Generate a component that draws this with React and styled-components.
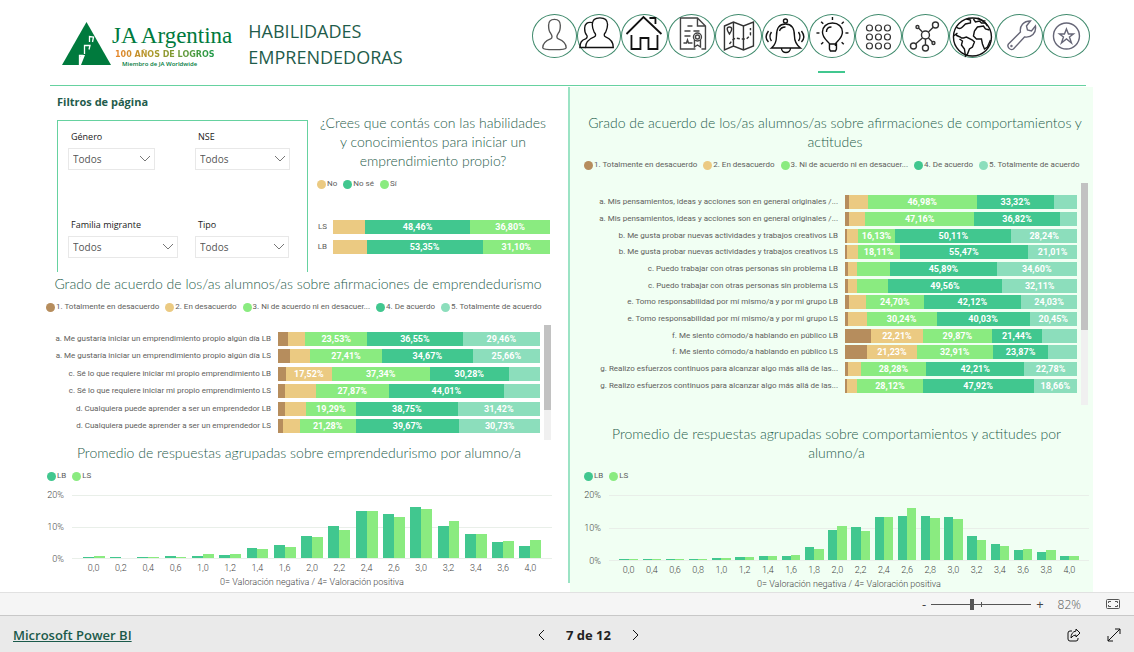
import React from 'react';
import styled, { createGlobalStyle } from 'styled-components';

const colors = {
  brown: '#b68d5d',
  sand: '#ebca82',
  lime: '#8aeb80',
  green: '#41c78f',
  mint: '#8cdebc',
  title: '#1f5c4b',
  text: '#605e5c',
  rule: '#66d2a0',
};

const agreement = [
  { name: '1. Totalmente en desacuerdo', color: colors.brown },
  { name: '2. En desacuerdo', color: colors.sand },
  { name: '3. Ni de acuerdo ni en desacuer...', color: colors.lime },
  { name: '4. De acuerdo', color: colors.green },
  { name: '5. Totalmente de acuerdo', color: colors.mint },
];

const confidence = [
  { name: 'No', color: colors.sand },
  { name: 'No sé', color: colors.green },
  { name: 'Sí', color: colors.lime },
];

const lines = [
  { name: 'LB', color: colors.green },
  { name: 'LS', color: colors.lime },
];

const confidenceRows = [
  { label: 'LS', values: [14.74, 48.46, 36.8] },
  { label: 'LB', values: [15.55, 53.35, 31.1] },
];

const entrepreneurRows = [
  { label: 'a. Me gustaría iniciar un emprendimiento propio algún día LB', values: [3.9, 6.56, 23.53, 36.55, 29.46] },
  { label: 'a. Me gustaría iniciar un emprendimiento propio algún día LS', values: [4.4, 7.86, 27.41, 34.67, 25.66] },
  { label: 'c. Sé lo que requiere iniciar mi propio emprendimiento LB', values: [3, 17.52, 37.34, 30.28, 11.86] },
  { label: 'c. Sé lo que requiere iniciar mi propio emprendimiento LS', values: [2.7, 11.7, 27.87, 44.01, 13.72] },
  { label: 'd. Cualquiera puede aprender a ser un emprendedor LB', values: [2.7, 7.84, 19.29, 38.75, 31.42] },
  { label: 'd. Cualquiera puede aprender a ser un emprendedor LS', values: [2, 6.32, 21.28, 39.67, 30.73] },
];

const behaviourRows = [
  { label: 'a. Mis pensamientos, ideas y acciones son en general originales /...', values: [1.6, 8.2, 46.98, 33.32, 9.9] },
  { label: 'a. Mis pensamientos, ideas y acciones son en general originales /...', values: [1.6, 7, 47.16, 36.82, 7.42] },
  { label: 'b. Me gusta probar nuevas actividades y trabajos creativos LB', values: [1, 4.52, 16.13, 50.11, 28.24] },
  { label: 'b. Me gusta probar nuevas actividades y trabajos creativos LS', values: [0.7, 4.71, 18.11, 55.47, 21.01] },
  { label: 'c. Puedo trabajar con otras personas sin problema LB', values: [1.4, 3.6, 14.51, 45.89, 34.6] },
  { label: 'c. Puedo trabajar con otras personas sin problema LS', values: [1.5, 3.5, 13.33, 49.56, 32.11] },
  { label: 'e. Tomo responsabilidad por mí mismo/a y por mi grupo LB', values: [1.9, 7.25, 24.7, 42.12, 24.03] },
  { label: 'e. Tomo responsabilidad por mí mismo/a y por mi grupo LS', values: [1.1, 8.18, 30.24, 40.03, 20.45] },
  { label: 'f. Me siento cómodo/a hablando en público LB', values: [11.3, 22.21, 29.87, 21.44, 15.18] },
  { label: 'f. Me siento cómodo/a hablando en público LS', values: [9.6, 21.23, 32.91, 23.87, 12.39] },
  { label: 'g. Realizo esfuerzos continuos para alcanzar algo más allá de las...', values: [1.2, 5.53, 28.28, 42.21, 22.78] },
  { label: 'g. Realizo esfuerzos continuos para alcanzar algo más allá de las...', values: [0.8, 4.5, 28.12, 47.92, 18.66] },
];

const entrepreneurColumns = [
  ['0,0', 0.4, 0.6], ['0,2', 0.4, 0], ['0,4', 0.4, 0.4], ['0,6', 0.5, 0.4], ['1,0', 0.8, 1.2],
  ['1,2', 1.1, 1.2], ['1,4', 3.1, 2.9], ['1,6', 4.3, 3.7], ['2,0', 7.2, 6.9], ['2,2', 10.4, 8.9],
  ['2,4', 15.2, 15.2], ['2,6', 14.2, 13.2], ['3,0', 16.4, 15.7], ['3,2', 10.4, 11.9], ['3,4', 7.9, 7.9],
  ['3,6', 5.3, 5.6], ['4,0', 4, 5.7],
];

const behaviourColumns = [
  ['0,0', 0.4, 0.4], ['0,4', 0.4, 0.4], ['0,6', 0.4, 0.4], ['0,8', 0.4, 0.4], ['1,0', 0.5, 0.5],
  ['1,2', 0.8, 0.8], ['1,4', 1.4, 1.1], ['1,6', 1.3, 1.5], ['1,8', 4.2, 3.3], ['2,0', 9.4, 10.6],
  ['2,2', 10.2, 9.2], ['2,4', 13.3, 13.3], ['2,6', 13.7, 16.1], ['2,8', 13.8, 13.1], ['3,0', 13.4, 12.9],
  ['3,2', 7.6, 6.3], ['3,4', 5.1, 4.5], ['3,6', 3.1, 3.5], ['3,8', 2.4, 3.2], ['4,0', 1.4, 1.4],
];

const rays = [0, 45, 90, 135, 225, 270, 315];

const navItems = [
  {
    name: 'Perfil',
    stroke: '#555',
    icon: <path d="M11 34c0-5 3-7 8-9 2-1 2-3 0-6-2-2-2-4-2-8 0-4 2-6 6-6s6 2 6 6c0 4 0 6-2 8-2 3-2 5 0 6 5 2 8 4 8 9 0 1-3 2-12 2s-12-1-12-2z" />,
  },
  {
    name: 'Alumnos',
    stroke: '#111',
    icon: (
      <>
        <path d="M9 34c0-6 4-9 9-11 2-1 2-3 0-5-1-2-2-4-2-8 0-5 3-7 8-7s8 2 8 7c0 4-1 6-2 8-2 2-2 4 0 5 5 2 8 5 8 11z" />
        <path d="M9 34H3c0-5 2-8 6-9 2-1 2-3 1-4-2-2-2-4-2-7 0-5 3-7 8-6" />
      </>
    ),
  },
  {
    name: 'Inicio',
    stroke: '#111',
    width: 1.8,
    icon: (
      <>
        <path d="M5 20 22 3l18 17M28 4h6v6" />
        <path d="M10 21v14h9V24h8v11h9V21" />
      </>
    ),
  },
  {
    name: 'Certificado',
    stroke: '#444',
    icon: (
      <>
        <path d="M27 35H12V4h17l8 8v23h-4M29 4v8h8" />
        <path d="M19 12h5M16 17h6M25 17h6M16 22h6M15 29h3l1-3 1 3h4" />
        <circle cx="29" cy="23" r="4" />
        <circle cx="29" cy="23" r="2" />
        <path d="M26 26v7l3-2 3 2v-7" />
      </>
    ),
  },
  {
    name: 'Mapa',
    stroke: '#333',
    icon: (
      <>
        <path d="M9 12l9-4 10 4 10-4v24l-10 4-10-4-9 4zM18 8v24M28 12v24" />
        <path d="M14 20c-3-4-3-7 0-7s3 3 0 7z" />
        <path d="M14 30l3-4 3-2 6 1 5 0 4-4v-7" strokeDasharray="3 2" />
      </>
    ),
  },
  {
    name: 'Alertas',
    stroke: '#111',
    icon: (
      <>
        <path d="M9 34c4-3 5-7 5-12 0-8 3-12 9-12s9 4 9 12c0 5 2 9 6 12z" />
        <circle cx="23" cy="7" r="2" />
        <path d="M19 34c0 6 9 6 9 0M17 17c1-3 3-4 6-4" />
        <path d="M9 18c-2 3-2 6 0 9M6 17c-3 4-3 8 0 11M36 18c2 3 2 6 0 9M39 17c3 4 3 8 0 11" />
      </>
    ),
  },
  {
    name: 'Habilidades',
    stroke: '#111',
    active: true,
    icon: (
      <>
        <path d="M20 32v-2c0-2-7-5-7-12 0-5 4-9 10-9s10 4 10 9c0 7-7 10-7 12v2M20 30h7v5l-1 2h-5l-1-2zM17 18c0-3 2-5 5-5" />
        {rays.map(angle => (
          <path key={angle} d="M23 6V3" transform={`rotate(${angle} 23 19)`} />
        ))}
      </>
    ),
  },
  {
    name: 'Módulos',
    stroke: '#333',
    width: 1.2,
    icon: [14, 23, 32].map(cy => [14, 23, 32].map(cx => <circle key={`${cx}-${cy}`} cx={cx} cy={cy} r="3" />)),
  },
  {
    name: 'Redes',
    stroke: '#333',
    icon: (
      <>
        <circle cx="23" cy="21" r="4" />
        <circle cx="15" cy="13" r="1.500" />
        <circle cx="33" cy="11" r="3" />
        <circle cx="11" cy="32" r="3" />
        <circle cx="23" cy="34" r="3" />
        <circle cx="31" cy="29" r="1.500" />
        <path d="M20 18l-4-4M26 18l5-5M20 24l-7 6M23 25v6M26 24l4 4" />
      </>
    ),
  },
  {
    name: 'Mundo',
    stroke: '#111',
    icon: (
      <>
        <circle cx="23" cy="23" r="19" />
        <path d="M7 13c2 2 4 2 6 0l3-3 5-1 0-3-4-1M4 22l4-3M6 20c2 3 4 2 6 4l2 0 3-1 6 3 2 2-2 5-3 2-2 5-2 2-1-7-3-4 1-4-3-2" />
        <path d="M25 17l3-4 6-1 2 3 4 1M25 17l-1 5 3 3h5l1 5 2 5 3-2 3-7M24 5l2 3 4-1 2 2h4l2 3M28 4l6 3h2" />
      </>
    ),
  },
  {
    name: 'Herramientas',
    stroke: '#667',
    icon: (
      <>
        <path d="M12 30l12-12c-1-6 3-11 10-11l-4 5 1 4 4 1 4-5c1 7-4 12-11 11L17 35c-3 2-7-2-5-5z" />
        <circle cx="15" cy="32" r="0.500" />
      </>
    ),
  },
  {
    name: 'Destacados',
    stroke: '#667',
    icon: (
      <>
        <circle cx="23" cy="22" r="13" />
        <path d="M23 15l2 5h5l-4 3 2 6-5-4-5 4 2-6-4-3h5z" />
      </>
    ),
  },
];

const filters = [
  { id: 'genero', name: 'Género', width: 87 },
  { id: 'nse', name: 'NSE', width: 95 },
  { id: 'familia', name: 'Familia migrante', width: 110 },
  { id: 'tipo', name: 'Tipo', width: 94 },
];

// Percentages below this do not fit inside their segment
const MIN_LABEL = 16;

const formatPercent = value => `${value.toFixed(2).replace('.', ',')}%`;

const Legend = ({ items, indent = 0 }) => (
  <StyledLegend $indent={indent}>
    {items.map(item => (
      <StyledLegendItem key={item.name}>
        <StyledDot $color={item.color} />
        {item.name}
      </StyledLegendItem>
    ))}
  </StyledLegend>
);

const StackedBars = ({ rows, series, labelWidth, gap }) => (
  <StyledRows>
    {rows.map((row, index) => (
      <StyledRow key={index} $labelWidth={labelWidth} $gap={gap}>
        <StyledRowLabel>{row.label}</StyledRowLabel>
        <StyledTrack>
          {row.values.map((value, i) => (
            <StyledSegment key={series[i].name} $color={series[i].color} style={{ width: `${value}%` }}>
              {value >= MIN_LABEL && formatPercent(value)}
            </StyledSegment>
          ))}
        </StyledTrack>
      </StyledRow>
    ))}
  </StyledRows>
);

const ColumnChart = ({ columns, height, scaleWidth, right }) => (
  <StyledColumnChart $scaleWidth={scaleWidth} $right={right}>
    <StyledScale $height={height}>
      <span>20%</span>
      <span>10%</span>
      <span>0%</span>
    </StyledScale>
    <div>
      <StyledPlot $height={height}>
        {columns.map(([name, lb, ls]) => (
          <StyledGroup key={name}>
            <StyledColumn $color={colors.green} style={{ height: `${lb * 5}%` }} />
            <StyledColumn $color={colors.lime} style={{ height: `${ls * 5}%` }} />
          </StyledGroup>
        ))}
      </StyledPlot>
      <StyledTicks>
        {columns.map(([name]) => <span key={name}>{name}</span>)}
      </StyledTicks>
      <StyledAxisTitle>0= Valoración negativa / 4= Valoración positiva</StyledAxisTitle>
    </div>
  </StyledColumnChart>
);

const Filter = ({ id, name, width }) => (
  <StyledFilter>
    <StyledFilterLabel htmlFor={id}>{name}</StyledFilterLabel>
    <StyledSelectBox $width={width}>
      <StyledSelect id={id} defaultValue="Todos">
        <option>Todos</option>
      </StyledSelect>
      <StyledChevron viewBox="0 0 12 12">
        <path d="M1 3l5 5 5-5" />
      </StyledChevron>
    </StyledSelectBox>
  </StyledFilter>
);

export default function App() {
  return (
    <StyledPage>
      <GlobalStyle />
      <StyledHeader>
        <StyledLogo>
          <svg width="49" height="43" viewBox="0 0 49 43" aria-hidden="true">
            <path d="M24.500 0L49 43H0z" fill="#007a3d" />
            <path d="M27.500 20v-5.500l4 .5-1 5M22.500 32v-8.500h5.500l-1 4M17.500 43V33.500h4" fill="none" stroke="#fff" strokeWidth="1.300" />
            <path d="M17 43v-8l4-2h2l-4 10z" fill="#fff" />
          </svg>
          <div>
            <StyledBrand>JA Argentina</StyledBrand>
            <StyledTagline>100 AÑOS DE LOGROS</StyledTagline>
            <StyledMember>Miembro de JA Worldwide</StyledMember>
          </div>
        </StyledLogo>
        <StyledHeading>HABILIDADES EMPRENDEDORAS</StyledHeading>
        <StyledNav>
          {navItems.map(item => (
            <StyledNavButton key={item.name} aria-label={item.name} aria-current={item.active ? 'page' : undefined}>
              <svg viewBox="0 0 46 44" fill="none" stroke={item.stroke} strokeWidth={item.width || 1.4}>
                {item.icon}
              </svg>
            </StyledNavButton>
          ))}
        </StyledNav>
      </StyledHeader>
      <StyledRule />

      <StyledReport>
        <StyledPanel>
          <StyledTop>
            <StyledFilters>
              <StyledFiltersTitle>Filtros de página</StyledFiltersTitle>
              <StyledFiltersBox>
                {filters.map(filter => <Filter key={filter.id} {...filter} />)}
              </StyledFiltersBox>
            </StyledFilters>
            <StyledQuestion>
              <StyledTitle $right={3}>
                ¿Crees que contás con las habilidades y conocimientos para iniciar un emprendimiento propio?
              </StyledTitle>
              <Legend items={confidence} />
              <StyledQuestionBars>
                <StackedBars rows={confidenceRows} series={confidence} labelWidth={10} gap={6} />
              </StyledQuestionBars>
            </StyledQuestion>
          </StyledTop>
          <StyledTitle $right={16}>Grado de acuerdo de los/as alumnos/as sobre afirmaciones de emprendedurismo</StyledTitle>
          <Legend items={agreement} indent={2} />
          <StyledScroller $height={115} $padding={5} $right={17}>
            <StackedBars rows={entrepreneurRows} series={agreement} labelWidth={227} gap={7} />
            <StyledScrollbar $thumb={74} />
          </StyledScroller>
          <StyledLowerTitle $top={3} $right={14}>
            Promedio de respuestas agrupadas sobre emprendedurismo por alumno/a
          </StyledLowerTitle>
          <Legend items={lines} indent={3} />
          <ColumnChart columns={entrepreneurColumns} height={64} scaleWidth={20} right={16} />
        </StyledPanel>

        <StyledDivider />

        <StyledPanel $tinted>
          <StyledTitle $right={7}>
            Grado de acuerdo de los/as alumnos/as sobre afirmaciones de comportamientos y actitudes
          </StyledTitle>
          <Legend items={agreement} />
          <StyledScroller $height={222} $padding={11} $right={5}>
            <StackedBars rows={behaviourRows} series={agreement} labelWidth={254} gap={7} />
            <StyledScrollbar $thumb={66} />
          </StyledScroller>
          <StyledLowerTitle $top={19} $right={4}>
            Promedio de respuestas agrupadas sobre comportamientos y actitudes por alumno/a
          </StyledLowerTitle>
          <Legend items={lines} />
          <ColumnChart columns={behaviourColumns} height={66} scaleWidth={17} right={4} />
        </StyledPanel>
      </StyledReport>

      <StyledZoomBar>
        <StyledZoomButton aria-label="Alejar">-</StyledZoomButton>
        <StyledRange type="range" min="10" max="150" defaultValue="66" aria-label="Zoom" />
        <StyledZoomButton aria-label="Acercar">+</StyledZoomButton>
        <StyledZoomValue>82%</StyledZoomValue>
        <StyledZoomButton aria-label="Ajustar a la página">
          <svg width="14" height="10" viewBox="0 0 14 10" fill="none" stroke="#555">
            <rect x="0.5" y="0.5" width="13" height="9" rx="1" />
            <path d="M5 2.500H2.500V4M2.500 6v1.500H5M9 2.500h2.500V4M11.500 6v1.500H9" />
          </svg>
        </StyledZoomButton>
      </StyledZoomBar>

      <StyledFooter>
        <StyledLink href="#powerbi">Microsoft Power BI</StyledLink>
        <StyledPager>
          <StyledIconButton aria-label="Página anterior">
            <svg width="12" height="12" viewBox="0 0 12 12"><path d="M8 1L3 6l5 5" /></svg>
          </StyledIconButton>
          <span>7 de 12</span>
          <StyledIconButton aria-label="Página siguiente">
            <svg width="12" height="12" viewBox="0 0 12 12"><path d="M4 1l5 5-5 5" /></svg>
          </StyledIconButton>
        </StyledPager>
        <StyledActions>
          <StyledIconButton aria-label="Compartir">
            <svg width="14" height="14" viewBox="0 0 14 14">
              <path d="M5 3H3Q1 3 1 5v6q0 2 2 2h6q2 0 2-2v-1" />
              <path d="M9 1l4 4-4 4V7Q6 7 4 10 4 4 9 3z" />
            </svg>
          </StyledIconButton>
          <StyledIconButton aria-label="Pantalla completa">
            <svg width="14" height="14" viewBox="0 0 14 14">
              <path d="M1 13L13 1M8 1h5v5M1 8v5h5" />
            </svg>
          </StyledIconButton>
        </StyledActions>
      </StyledFooter>
    </StyledPage>
  );
}

const GlobalStyle = createGlobalStyle`
  *, *::before, *::after {
    box-sizing: border-box;
  }

  body {
    margin: 0;
    background: #fff;
    font-family: 'Open Sans', 'Noto Sans', sans-serif;
  }

  button, input, select {
    font: inherit;
  }

  button {
    padding: 0;
    border: 0;
    background: none;
    cursor: pointer;
  }
`;

const StyledPage = styled.div`
  display: flex;
  flex-direction: column;
  min-height: 100vh;
`;

const StyledHeader = styled.header`
  display: flex;
  align-items: flex-start;
  height: 85px;
  padding: 14px 44px 0 62px;
`;

const StyledLogo = styled.div`
  display: flex;
  align-items: flex-start;
  gap: 1px;
  padding-top: 8px;
  white-space: nowrap;
`;

const StyledBrand = styled.div`
  font-family: 'Liberation Serif', serif;
  font-size: 23px;
  line-height: 27px;
  color: #007a3d;
`;

const StyledTagline = styled.div`
  width: max-content;
  margin-left: 3px;
  font-family: 'DejaVu Sans', sans-serif;
  font-size: 8px;
  font-weight: bold;
  line-height: 12px;
  color: transparent;
  background: linear-gradient(90deg, #e8852a, #a89a2c 40%, #1b9a4a);
  background-clip: text;
`;

const StyledMember = styled.div`
  margin-left: 10px;
  font-size: 6px;
  font-weight: 600;
  line-height: 6px;
  color: #007a3d;
`;

const StyledHeading = styled.h1`
  width: 170px;
  margin: 4px auto 0 16px;
  font-size: 18px;
  font-weight: 400;
  line-height: 26px;
  color: ${colors.title};
`;

const StyledNav = styled.nav`
  display: grid;
  grid-template-columns: 45fr 44fr repeat(10, 47fr);
  width: 558px;
`;

const StyledNavButton = styled.button`
  position: relative;
  height: 44px;
  border-radius: 50%;
  box-shadow: inset 0 0 0 1px #3f8a6c;

  svg {
    display: block;
    width: 100%;
    height: 100%;
  }

  &[aria-current]::after {
    content: '';
    position: absolute;
    top: 57px;
    left: 9px;
    right: 10px;
    height: 2px;
    background: ${colors.green};
  }
`;

const StyledRule = styled.hr`
  width: auto;
  height: 1px;
  margin: 0 48px 1px 50px;
  border: 0;
  background: ${colors.rule};
`;

const StyledReport = styled.main`
  flex: 1;
  display: grid;
  grid-template-columns: 524fr 2px 523fr;
  padding: 0 41px 0 44px;
`;

const StyledPanel = styled.section`
  min-width: 0;
  padding: ${props => (props.$tinted ? '26px 0 0 14px' : '0')};
  background: ${props => (props.$tinted ? '#f1fff3' : 'transparent')};
`;

const StyledDivider = styled.div`
  margin-bottom: 9px;
  background: #9be3c4;
`;

const StyledTop = styled.div`
  display: grid;
  grid-template-columns: 251fr 235fr;
  gap: 9px;
  height: 185px;
  margin-bottom: 2px;
  padding: 0 16px 0 13px;
`;

const StyledFilters = styled.div`
  display: flex;
  flex-direction: column;
  gap: 10px;
  padding-top: 7px;
`;

const StyledFiltersTitle = styled.h2`
  margin: 0;
  font-size: 11px;
  font-weight: 700;
  line-height: 16px;
  color: ${colors.title};
`;

const StyledFiltersBox = styled.div`
  flex: 1;
  display: grid;
  grid-template-columns: 127fr 112fr;
  align-content: start;
  row-gap: 49px;
  padding: 10px 0 0 10px;
  border: solid ${colors.rule};
  border-width: 1px 1px 0;
`;

const StyledFilter = styled.div`
  display: flex;
  flex-direction: column;
  gap: 5px;
`;

const StyledFilterLabel = styled.label`
  padding-left: 3px;
  font-size: 9px;
  line-height: 12px;
  color: #222;
`;

const StyledSelectBox = styled.div`
  position: relative;
  width: ${props => props.$width}px;
`;

const StyledSelect = styled.select`
  display: block;
  width: 100%;
  height: 22px;
  padding: 0 4px;
  border: 1px solid #e8e8e8;
  border-radius: 0;
  appearance: none;
  background: #fff;
  font-size: 10px;
  color: #555;
`;

const StyledChevron = styled.svg`
  position: absolute;
  top: 5px;
  right: 4px;
  width: 12px;
  height: 12px;
  fill: none;
  stroke: #777;
  pointer-events: none;
`;

const StyledQuestion = styled.div`
  padding-top: 26px;
`;

const StyledQuestionBars = styled.div`
  display: flex;
  height: 40px;
  margin: 25px 2px 0 0;
`;

const StyledTitle = styled.h2`
  margin: 0 ${props => props.$right || 0}px 6px 0;
  font-family: Lato, sans-serif;
  font-size: 14px;
  font-weight: 300;
  line-height: 19px;
  text-align: center;
  color: ${colors.title};
`;

const StyledLowerTitle = styled(StyledTitle)`
  padding: 0 20px;
  margin-top: ${props => props.$top}px;
`;

const StyledLegend = styled.div`
  display: flex;
  gap: 6px;
  padding-left: ${props => props.$indent}px;
  font-family: Roboto, sans-serif;
  font-size: 8px;
  line-height: 16px;
  white-space: nowrap;
  color: ${colors.text};
`;

const StyledLegendItem = styled.span`
  display: flex;
  align-items: center;
  gap: 1px;
`;

const StyledDot = styled.span`
  width: 9px;
  height: 9px;
  border-radius: 50%;
  background: ${props => props.$color};
`;

const StyledScroller = styled.div`
  display: flex;
  gap: 4px;
  height: ${props => props.$height}px;
  margin-top: 10px;
  padding-right: ${props => props.$right}px;

  > :first-child {
    padding: ${props => props.$padding}px 0;
  }
`;

const StyledScrollbar = styled.div`
  width: 7px;
  background: linear-gradient(#c2c2c2 ${props => props.$thumb}%, #f0f0f0 0);
`;

const StyledRows = styled.div`
  flex: 1;
  display: flex;
  flex-direction: column;
  min-width: 0;
`;

const StyledRow = styled.div`
  flex: 1;
  display: grid;
  grid-template-columns: ${props => props.$labelWidth}px 1fr;
  align-items: center;
  gap: ${props => props.$gap}px;
`;

const StyledRowLabel = styled.span`
  overflow: hidden;
  font-family: Roboto, sans-serif;
  font-size: 8px;
  line-height: 12px;
  text-align: right;
  white-space: nowrap;
  color: ${colors.text};
`;

const StyledTrack = styled.div`
  display: flex;
  height: 14px;
`;

const StyledSegment = styled.span`
  overflow: hidden;
  font-family: Roboto, sans-serif;
  font-size: 9px;
  font-weight: 700;
  line-height: 15px;
  text-align: center;
  color: #fff;
  background: ${props => props.$color};
`;

const StyledColumnChart = styled.div`
  display: grid;
  grid-template-columns: ${props => props.$scaleWidth}px 1fr;
  gap: 8px;
  margin-top: 11px;
  padding-right: ${props => props.$right}px;
  font-family: Roboto, sans-serif;
  font-size: 9px;
  font-weight: 300;
  line-height: 12px;
  color: #444;
`;

const StyledScale = styled.div`
  display: flex;
  flex-direction: column;
  justify-content: space-between;
  height: ${props => props.$height + 12}px;
  margin-top: -6px;
  text-align: right;
`;

const StyledPlot = styled.div`
  display: flex;
  height: ${props => props.$height}px;
  padding: 0 8px;
  border: solid #e9efe9;
  border-width: 1px 0;
  background: linear-gradient(#e9efe9, #e9efe9) center / 100% 1px no-repeat;
`;

const StyledGroup = styled.div`
  flex: 1;
  display: flex;
  align-items: flex-end;
  justify-content: center;
`;

const StyledColumn = styled.div`
  width: 40%;
  background: ${props => props.$color};
`;

const StyledTicks = styled.div`
  display: flex;
  margin-top: 3px;
  padding: 0 8px;

  span {
    flex: 1;
    text-align: center;
  }
`;

const StyledAxisTitle = styled.div`
  margin-top: 2px;
  text-align: center;
`;

const StyledZoomBar = styled.div`
  display: flex;
  align-items: center;
  justify-content: flex-end;
  gap: 5px;
  height: 24px;
  padding-right: 14px;
  border: solid #c8c8c8;
  border-width: 1px 0;
  border-top-color: #e1e1e1;
  background: #f5f5f5;
  color: #555;
`;

const StyledZoomButton = styled.button`
  display: flex;
  color: #444;
  font-size: 13px;
  line-height: 16px;
`;

const StyledRange = styled.input`
  width: 100px;
  height: 12px;
  margin: 0;
  appearance: none;
  background:
    linear-gradient(#555, #555) center / 100% 1px no-repeat,
    linear-gradient(#555, #555) center / 1px 5px no-repeat;

  &::-webkit-slider-thumb {
    appearance: none;
    width: 4px;
    height: 11px;
    background: #555;
  }
`;

const StyledZoomValue = styled.span`
  margin: 0 20px 0 9px;
  font-size: 12px;
  font-weight: 300;
`;

const StyledFooter = styled.footer`
  display: grid;
  grid-template-columns: 1fr auto 1fr;
  align-items: center;
  height: 36px;
  padding: 2px 13px 0;
  background: #eaeaea;
`;

const StyledLink = styled.a`
  font-size: 13px;
  font-weight: 600;
  color: #1b5a4b;
`;

const StyledPager = styled.div`
  display: flex;
  align-items: center;
  gap: 18px;
  padding-left: 43px;
  font-size: 13px;
  font-weight: 700;
  color: #222;
`;

const StyledIconButton = styled.button`
  display: flex;

  svg {
    fill: none;
    stroke: #111;
  }
`;

const StyledActions = styled.div`
  display: flex;
  justify-content: flex-end;
  gap: 26px;
`;
